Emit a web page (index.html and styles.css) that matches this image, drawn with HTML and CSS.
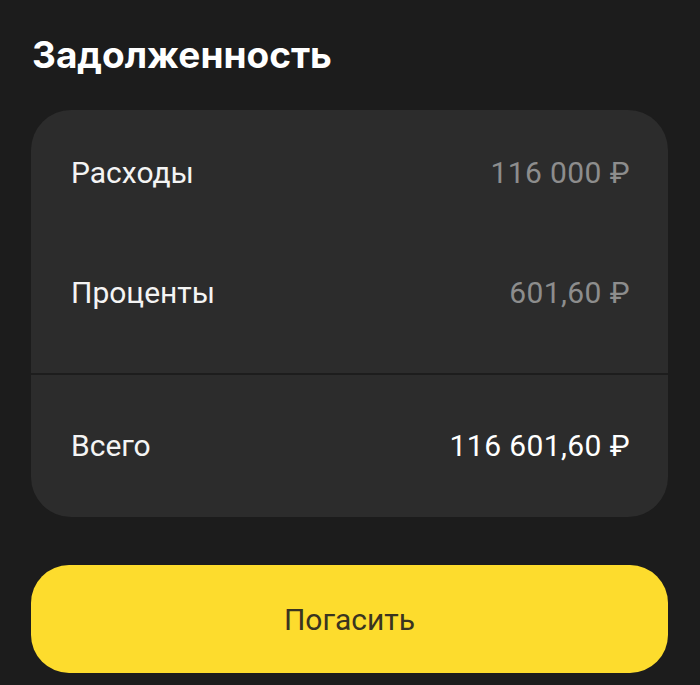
FILE: index.html
```html
<!DOCTYPE html>
<html lang="ru">
<head>
<meta charset="utf-8">
<link rel="stylesheet" href="styles.css">
</head>
<body>
<main class="screen">
  <h1 class="title">Задолженность</h1>
  <section class="card">
    <div class="group top">
      <div class="row"><span class="label">Расходы</span><span class="value muted">116 000 ₽</span></div>
      <div class="row"><span class="label">Проценты</span><span class="value muted">601,60 ₽</span></div>
    </div>
    <div class="divider"></div>
    <div class="group bottom">
      <div class="row"><span class="label">Всего</span><span class="value strong">116 601,60 ₽</span></div>
    </div>
  </section>
  <button class="pay">Погасить</button>
</main>
</body>
</html>
```
FILE: styles.css
```css
html, body {
  margin: 0;
  padding: 0;
  background: #1c1c1c;
}
body {
  font-family: Roboto, "Noto Sans", sans-serif;
  color: #fff;
}
.screen {
  width: 700px;
  height: 685px;
  padding: 0 32px 0 31px;
  box-sizing: border-box;
  overflow: hidden;
}
.title {
  margin: 0;
  padding: 30px 0 0 1px;
  height: 110px;
  box-sizing: border-box;
  font-family: Inter, Roboto, sans-serif;
  font-size: 37px;
  font-weight: 700;
  line-height: 50px;
  letter-spacing: 0;
}
.card {
  background: #2c2c2c;
  border-radius: 40px;
  overflow: hidden;
  height: 407px;
  box-sizing: border-box;
}
.group.top {
  padding: 2px 0 21px;
}
.group.bottom {
  padding-top: 10px;
}
.row {
  height: 120px;
  display: flex;
  align-items: center;
  justify-content: space-between;
  padding: 0 38px 0 40px;
  font-size: 30px;
  font-weight: 400;
}
.label {
  color: #f4f4f4;
}
.value {
  letter-spacing: 0.4px;
}
.value.muted {
  color: #8d8d8d;
}
.value.strong {
  color: #ffffff;
}
.divider {
  height: 2px;
  background: #1d1d1d;
}
.pay {
  display: block;
  width: 100%;
  margin-top: 48px;
  height: 108px;
  border: none;
  border-radius: 38px;
  background: #fddc2d;
  color: #3a3420;
  font-family: Roboto, sans-serif;
  font-size: 30px;
  font-weight: 400;
}
```
